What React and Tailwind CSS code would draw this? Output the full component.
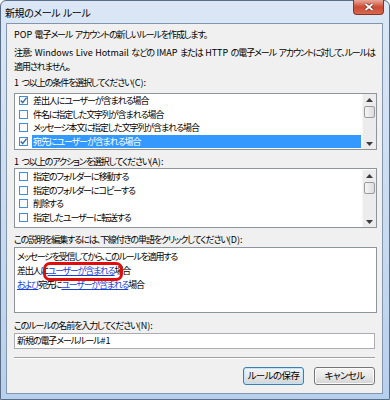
const CONDITIONS = [
  { label: '差出人にユーザーが含まれる場合', checked: true },
  { label: '件名に指定した文字列が含まれる場合', checked: false },
  { label: 'メッセージ本文に指定した文字列が含まれる場合', checked: false },
  { label: '宛先にユーザーが含まれる場合', checked: true, selected: true },
];

const ACTIONS = [
  { label: '指定のフォルダーに移動する', checked: false },
  { label: '指定のフォルダーにコピーする', checked: false },
  { label: '削除する', checked: false },
  { label: '指定したユーザーに転送する', checked: false },
];

// Japanese runs are set tight (Meiryo UI is narrow), ASCII runs keep normal spacing
function J({ t }) {
  return t.split(/([\x20-\x7e]+)/).map((s, i) =>
    i % 2 ? <span key={i} className="tracking-normal [word-spacing:0.5px]">{s}</span> : s
  );
}

function CheckBox({ checked }) {
  return (
    <span className="w-[9px] h-[9px] shrink-0 border border-[#3f8ed6] bg-gradient-to-br from-[#f4f8fc] to-white flex items-center justify-center">
      {checked && (
        <svg width="9" height="9" viewBox="0 0 9 9" className="-m-px">
          <path d="M1.8 4.6 L3.7 6.6 L7.6 1.6" fill="none" stroke="#3a6ea8" strokeWidth="1.5" />
        </svg>
      )}
    </span>
  );
}

function ScrollBar() {
  return (
    <div className="w-[14px] bg-[#ececec] border-l border-[#f6f6f6] flex flex-col items-center">
      <div className="h-[11px] flex items-center justify-center">
        <svg width="7" height="4" viewBox="0 0 7 4"><path d="M3.5 0 L7 4 L0 4 Z" fill="#3c3c3c" /></svg>
      </div>
      <div className="mt-[1px] w-[11px] h-[12px] rounded-[2px] border border-[#9b9b9b] bg-gradient-to-r from-[#f4f4f4] to-[#dcdcdc]" />
      <div className="flex-1" />
      <div className="h-[11px] flex items-center justify-center">
        <svg width="7" height="4" viewBox="0 0 7 4"><path d="M0 0 L7 0 L3.5 4 Z" fill="#3c3c3c" /></svg>
      </div>
    </div>
  );
}

function CheckList({ items, className }) {
  return (
    <div className={`border border-[#8e949c] bg-white flex ${className}`}>
      <div className="flex-1 flex flex-col">
        {items.map((it) => (
          <div key={it.label} className="h-[13.5px] flex items-center pl-[4px]">
            <CheckBox checked={it.checked} />
            <span
              className={`ml-[4px] mr-[1px] flex-1 h-full flex items-center pl-[1px] whitespace-nowrap ${
                it.selected ? 'bg-[#3399ff] text-white' : ''
              }`}
            >
              {it.label}
            </span>
          </div>
        ))}
      </div>
      <ScrollBar />
    </div>
  );
}

function Link({ children }) {
  return <span className="text-[#1640d8] underline underline-offset-[1px]">{children}</span>;
}

function WinButton({ children, isDefault }) {
  return (
    <button
      type="button"
      className={`h-[18px] w-[61px] rounded-[3px] border text-[9.5px] leading-none tracking-[-0.6px] text-black bg-gradient-to-b from-[#f4f4f4] via-[#e8e8e8] to-[#d3d3d3] ${
        isDefault ? 'border-[#3c7fb1] shadow-[inset_0_0_0_1px_#bfe4fb]' : 'border-[#767676] shadow-[inset_0_0_0_1px_#fcfcfc]'
      }`}
    >
      {children}
    </button>
  );
}

export default function App() {
  return (
    <div className="w-[390px] h-[400px] flex flex-col border border-[#5a6e88] rounded-t-[6px] bg-gradient-to-b from-[#dbe7f5] via-[#cbdcf0] to-[#b7d0ed] font-['Noto_Sans_CJK_JP',sans-serif] [font-feature-settings:'palt'] text-black">
      <div className="h-[22px] relative">
        <span className="absolute left-[4px] top-[5px] text-[10px] leading-[14px] tracking-[-0.4px] whitespace-nowrap">
          <J t="新規のメール ルール" />
        </span>
        <div className="absolute right-[5px] -top-px w-[31px] h-[15px] rounded-b-[4px] border border-t-0 border-[#8a3224] bg-gradient-to-b from-[#e9a899] via-[#cb4a34] to-[#d7684f] flex items-center justify-center">
          <svg width="10" height="8" viewBox="0 0 10 8">
            <path d="M1.5 1 L8.5 7 M8.5 1 L1.5 7" stroke="#6b2a20" strokeWidth="3.2" />
            <path d="M1.5 1 L8.5 7 M8.5 1 L1.5 7" stroke="#ffffff" strokeWidth="1.8" />
          </svg>
        </div>
      </div>

      <div className="flex-1 ml-[5px] mr-[6px] mb-[5px] bg-[#f0f0f0] border border-[#8496ae] pl-[7px] pr-[5px] pt-[4px] flex flex-col text-[9px] tracking-[-1.1px]">
        <p className="leading-[14px] whitespace-nowrap"><J t="POP 電子メール アカウントの新しいルールを作成します。" /></p>
        <p className="mt-[4px] leading-[14px] whitespace-nowrap">
          <J t="注意: Windows Live Hotmail などの IMAP または HTTP の電子メール アカウントに対して、ルールは" />
          <br />
          適用されません。
        </p>

        <p className="mt-[3px] leading-[12px] whitespace-nowrap"><J t="1 つ以上の条件を選択してください(C):" /></p>
        <CheckList items={CONDITIONS} className="mt-[4px] h-[57px]" />

        <p className="mt-[6px] leading-[12px] whitespace-nowrap"><J t="1 つ以上のアクションを選択してください(A):" /></p>
        <CheckList items={ACTIONS} className="mt-0 h-[60px] pt-[1px]" />

        <p className="mt-[6px] leading-[12px] whitespace-nowrap"><J t="この説明を編集するには、下線付きの単語をクリックしてください(D):" /></p>
        <div className="mt-[1px] h-[66px] border border-[#8e949c] bg-white pl-[2px] pt-[2px] relative tracking-[-1.25px]">
          <p className="leading-[14px] whitespace-nowrap">メッセージを受信してから、このルールを適用する</p>
          <p className="leading-[14px] whitespace-nowrap">差出人に<Link>ユーザーが含まれる</Link>場合</p>
          <p className="leading-[14px] whitespace-nowrap"><Link>および</Link>宛先に<Link>ユーザーが含まれる</Link>場合</p>
          <div className="absolute left-[28px] top-[14px] w-[80px] h-[19px] rounded-[7px] border-[3px] border-[#e00d0d]" />
        </div>

        <p className="mt-[7px] leading-[12px] whitespace-nowrap"><J t="このルールの名前を入力してください(N):" /></p>
        <div className="mt-[1px] mr-[2px] h-[16px] border border-[#abadb3] bg-white pl-[2px] flex items-center whitespace-nowrap">
          <J t="新規の電子メール ルール #1" />
        </div>

        <div className="mt-[8px] mr-[2px] h-px bg-[#a0a0a0] border-b border-white box-content" />

        <div className="mt-[8px] mr-[2px] flex justify-end gap-[10px]">
          <WinButton isDefault>ルールの保存</WinButton>
          <WinButton>キャンセル</WinButton>
        </div>
      </div>
    </div>
  );
}
